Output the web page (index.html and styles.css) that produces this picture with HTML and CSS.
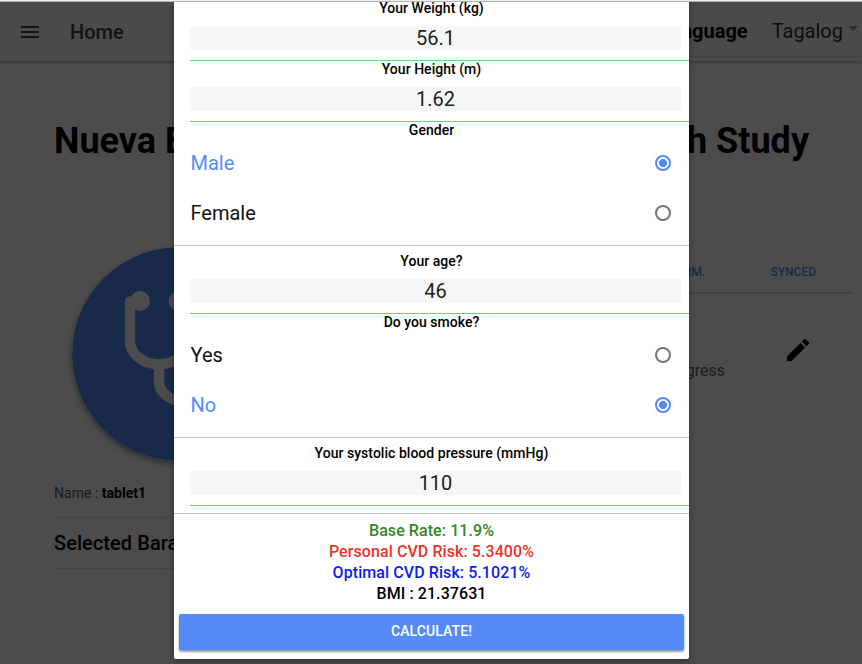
FILE: index.html
```
<!DOCTYPE html>
<html lang="en">
<head>
<meta charset="utf-8">
<title>CVD Risk</title>
<link rel="stylesheet" href="styles.css">
</head>
<body>
<div class="page">
  <header class="toolbar">
    <svg class="menu" viewBox="0 0 18 12"><path d="M0 0h18v2H0zM0 5h18v2H0zM0 10h18v2H0z"/></svg>
    <span class="home">Home</span>
    <div class="language"><b>Language</b><span class="choice">Tagalog</span><i class="caret"></i></div>
  </header>
  <main class="content">
    <h1 class="title"><span>Nueva E</span><span>Health Study</span></h1>
    <div class="columns">
      <section class="profile">
        <svg class="avatar" viewBox="0 0 214 214">
          <circle cx="107" cy="107" r="107" fill="#568bf7"/>
          <g fill="none" stroke="#fff" stroke-width="10.400" stroke-linecap="round">
            <path d="M58 54.500V94c0 13 13 23.300 29 23.300s29-10.300 29-23.300V54.500"/>
            <path d="M87 117v18c0 11 12 20 29 20s29-9 29-23v-20" stroke-linecap="butt"/>
          </g>
          <circle cx="68" cy="54" r="10" fill="#fff"/><circle cx="106.500" cy="54" r="10" fill="#fff"/>
        </svg>
        <p class="name">Name : <b>tablet1</b></p>
        <h2 class="selected">Selected Barangay</h2>
      </section>
      <section class="records">
        <div class="record-head"><span>CONFIRM.</span><span class="synced">SYNCED</span></div>
        <div class="record"><span class="progress">In Progress</span>
          <svg class="pencil" viewBox="3 3 18 18"><path d="M3 17.250V21h3.750L17.810 9.940l-3.750-3.750zM20.710 7.040a1 1 0 0 0 0-1.410l-2.340-2.340a1 1 0 0 0-1.410 0l-1.830 1.830 3.750 3.750z"/></svg>
        </div>
      </section>
    </div>
  </main>
</div>
<div class="backdrop"></div>
<div class="modal">
  <div class="form">
    <div class="field"><label>Your Weight (kg)</label><div class="value">56.1</div></div>
    <div class="field"><label>Your Height (m)</label><div class="value">1.62</div></div>
    <div class="group">
      <label>Gender</label>
      <div class="option on"><span>Male</span><i class="radio"></i></div>
      <div class="option"><span>Female</span><i class="radio"></i></div>
    </div>
    <div class="field spaced"><label>Your age?</label><div class="value">46</div></div>
    <div class="group">
      <label>Do you smoke?</label>
      <div class="option"><span>Yes</span><i class="radio"></i></div>
      <div class="option on"><span>No</span><i class="radio"></i></div>
    </div>
    <div class="field spaced"><label>Your systolic blood pressure (mmHg)</label><div class="value">110</div></div>
  </div>
  <div class="results">
    <div class="base">Base Rate: 11.9%</div>
    <div class="personal">Personal CVD Risk: 5.3400%</div>
    <div class="optimal">Optimal CVD Risk: 5.1021%</div>
    <div>BMI : 21.37631</div>
  </div>
  <div class="calculate">CALCULATE!</div>
</div>
<div class="window-edge"></div>
</body>
</html>
```
FILE: styles.css
```
* { box-sizing: border-box; }
body { margin: 0; width: 862px; height: 664px; overflow: hidden; position: relative; font-family: Roboto, sans-serif; color: #000; background: #fff; }
b { font-weight: 700; }
.page { height: 664px; overflow: hidden; }
.toolbar { height: 61px; padding: 2px 4px 0 21px; display: flex; align-items: center; background: #f8f8f8; box-shadow: 0 1px 4px rgba(0,0,0,.4); font-size: 20px; }
.menu { width: 18px; height: 12px; fill: #424242; margin-right: 31px; }
.home { font-weight: 500; color: #424242; }
.language { margin-left: auto; margin-right: -4px; padding-right: 4px; width: 184px; height: 55px; margin-bottom: 4px; padding-top: 4px; display: flex; align-items: center; justify-content: flex-end; border-bottom: 1px solid #dedede; }
.choice { margin-left: 24px; color: #333; font-weight: 400; }
.caret { margin: 0 0 5px 5px; border: 5px solid transparent; border-top-color: #999; border-bottom: 0; }
.content { padding: 57px 10px 0 54px; }
.title { display: flex; justify-content: space-between; margin: 0; padding-right: 43px; font-size: 36px; font-weight: 700; line-height: 46px; }
.columns { display: flex; justify-content: space-between; }
.profile { width: 320px; }
.avatar { display: block; width: 214px; height: 214px; margin: 83px 0 0 18px; border-radius: 50%; box-shadow: 0 3px 6px rgba(0,0,0,.4); }
.name { margin: 24px 0 0; height: 33px; line-height: 16px; font-size: 14px; color: #555; border-bottom: 1px solid #dedede; letter-spacing: .02px; }
.name b { color: #000; }
.selected { margin: 0; height: 51px; line-height: 51px; font-size: 20px; font-weight: 500; letter-spacing: .06px; border-bottom: 1px solid #dedede; }
.records { width: 300px; padding-top: 89px; }
.record-head { height: 41px; display: flex; padding: 9px 36px 0 0; justify-content: flex-end; gap: 65px; font-size: 12px; line-height: 20px; font-weight: 500; color: #568bf7; border-bottom: 2px solid #dedede; }
.record { display: flex; justify-content: flex-end; padding-right: 43px; }
.progress { font-size: 16px; line-height: 20px; color: #666; margin: 67px 62px 0 0; }
.pencil { width: 22px; height: 22px; margin-top: 45px; }
.backdrop { position: absolute; inset: 0; background: rgba(0,0,0,.7); }
.modal { position: absolute; left: 174px; top: 0; width: 515px; height: 659px; background: #fff; border-radius: 0 0 2px 2px; box-shadow: 0 2px 6px rgba(0,0,0,.35); }
.form { height: 514px; border-bottom: 1px solid #c4c4c4; }
label { display: block; font-size: 14px; font-weight: 500; line-height: 17px; letter-spacing: .03px; text-align: center; }
.field { height: 61px; }
.field .value { margin: 9px 8px 0 16px; height: 24px; line-height: 25px; font-size: 20px; text-align: center; color: #222; background: #f5f7f7; border-radius: 3px; }
.field::after { content: ""; display: block; margin: 10px 0 0 16px; height: 1px; background: #68d36c; }
.spaced { padding-top: 7px; height: 68px; }
.group { height: 124px; border-bottom: 1px solid #c4c4c4; }
.group label { height: 16px; line-height: 16px; }
.option { height: 50px; padding: 0 18px 0 16.500px; display: flex; align-items: center; justify-content: space-between; font-size: 20px; color: #111; }
.on { color: #568bf7; }
.radio { width: 16px; height: 16px; border: 2px solid #757575; border-radius: 50%; }
.on .radio { border-color: #568bf7; background: radial-gradient(circle, #568bf7 0 3.800px, transparent 4.300px); }
.results { padding-top: 6px; font-size: 16px; line-height: 21px; font-weight: 500; letter-spacing: .08px; text-align: center; }
.base { color: #348524; }
.personal { color: #ee3228; }
.optimal { color: #0c1ee9; }
.calculate { margin: 10px 5px 0; height: 36px; line-height: 35px; border-radius: 2px; background: #568bf7; box-shadow: 0 2px 2px rgba(0,0,0,.3), 0 1px 3px rgba(0,0,0,.2); color: #fff; font-size: 14px; font-weight: 500; letter-spacing: .1px; text-align: center; }
.window-edge { position: absolute; top: 0; left: 0; right: 0; height: 2px; background: #f0f0f0; border-bottom: 1px solid #b2b2b2; }
```
